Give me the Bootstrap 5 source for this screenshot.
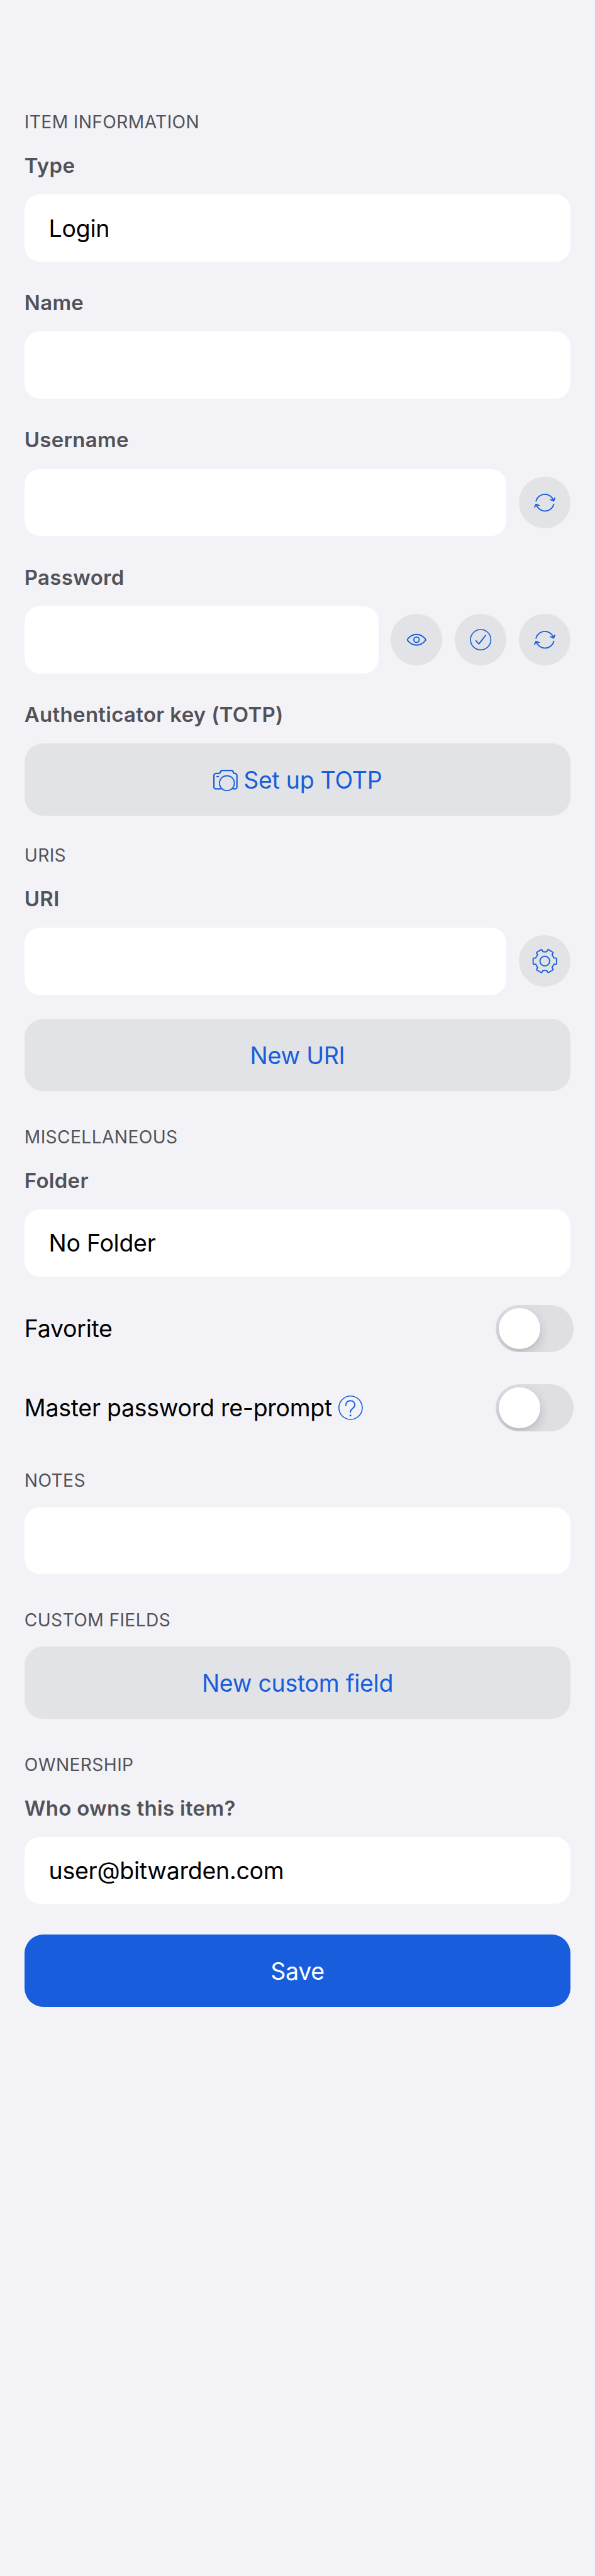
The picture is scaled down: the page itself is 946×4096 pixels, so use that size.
<!DOCTYPE html>
<html lang="en">
<head>
<meta charset="utf-8">
<meta name="viewport" content="width=device-width, initial-scale=1">
<title>Add item</title>
<link href="https://cdn.jsdelivr.net/npm/bootstrap@5.3.0/dist/css/bootstrap.min.css" rel="stylesheet">
<style>
/* 1rem is 16 points on the phone screen; --u is a third of a point */
html { font-size: 38.812px; }
:root { --u: .0208334rem; --brand: #175ddc; --fill: #e2e3e7; --muted: #525258; }
body {
  background: #f2f2f7; color: #000; min-height: 4096px;
  font-family: Inter, "Liberation Sans", sans-serif;
  font-size: calc(var(--u) * 46.4); letter-spacing: -.0075em; line-height: 1.25;
}
main { padding: calc(var(--u) * 215) 1rem 0; }
.section-title {
  font-size: calc(var(--u) * 34.9); line-height: 1rem; font-weight: 400;
  letter-spacing: .013em; color: var(--muted); text-transform: uppercase;
  padding-top: calc(var(--u) * 1.3); margin: 0 0 calc(var(--u) * 32.7);
}
.section-title.tight { margin-bottom: calc(var(--u) * 27.7); }
.field-label {
  display: block; font-size: calc(var(--u) * 40.8); line-height: calc(var(--u) * 54); font-weight: 600;
  letter-spacing: .009em; color: var(--muted);
  padding-top: calc(var(--u) * 2); margin: 0 0 calc(var(--u) * 29);
}
.field-group + .field-group { margin-top: calc(var(--u) * 53.1); }
.form-control, .form-control:focus {
  height: calc(var(--u) * 132); border: 0; border-radius: calc(var(--u) * 30);
  background: #fff; color: #000; padding: calc(var(--u) * 2) 1rem 0;
  font-size: inherit; letter-spacing: inherit; box-shadow: none;
}
.btn-wide {
  height: calc(var(--u) * 142); border: 0; border-radius: calc(var(--u) * 37); padding: calc(var(--u) * 3) 0 0;
  font-size: inherit; letter-spacing: inherit; background: var(--fill); color: var(--brand);
}
.btn-wide.primary { background: var(--brand); color: #fff; }
.btn-round {
  flex: none; width: calc(var(--u) * 102); height: calc(var(--u) * 102);
  border-radius: 50%; border: 0; padding: 0; background: var(--fill); color: var(--brand);
}
svg { display: block; fill: none; stroke: currentColor; stroke-width: 7; stroke-linecap: round; stroke-linejoin: round; }
.btn-round svg { width: 100%; height: 100%; }
.camera { width: calc(var(--u) * 48); height: calc(var(--u) * 42); margin-right: calc(var(--u) * 12); }
.help { width: 1rem; height: 1rem; color: var(--brand); margin-left: calc(var(--u) * 12); }
.section-gap { margin-top: calc(var(--u) * 65.1); }
.uris { padding-top: calc(var(--u) * 54.3); }
.toggles { margin-top: calc(var(--u) * 56); gap: calc(var(--u) * 63); }
.toggle-row { height: calc(var(--u) * 93); margin-right: calc(var(--u) * -6); }
.toggle-text { padding-top: calc(var(--u) * 2); }
.toggle {
  width: calc(var(--u) * 153); height: calc(var(--u) * 93); border-radius: 99rem;
  background: #dedee3; padding: calc(var(--u) * 6); overflow: hidden;
}
.knob {
  width: calc(var(--u) * 81); height: calc(var(--u) * 81); border-radius: 50%; background: #fff;
  box-shadow: 0 calc(var(--u) * 8) calc(var(--u) * 22) rgba(0,0,0,.16), 0 calc(var(--u) * 3) calc(var(--u) * 4) rgba(0,0,0,.05);
}
.notes { margin-top: calc(var(--u) * 72.1); }
.save { margin-top: calc(var(--u) * 60.3); }
</style>
</head>
<body>
<svg class="d-none">
  <symbol id="refresh" viewBox="0 0 306 306">
    <path d="M101 144A54 54 0 0 1 205 142M187 135L205 143L212 126M206 162A54 54 0 0 1 102 164M93 180L101 163L120 170"/>
  </symbol>
</svg>
<main>
  <section>
    <h2 class="section-title">Item information</h2>
    <div class="field-group">
      <label class="field-label">Type</label>
      <input class="form-control" value="Login" readonly>
    </div>
    <div class="field-group">
      <label class="field-label">Name</label>
      <input class="form-control">
    </div>
    <div class="field-group">
      <label class="field-label">Username</label>
      <div class="d-flex align-items-center gap-2">
        <input class="form-control">
        <button class="btn btn-round"><svg><use href="#refresh"/></svg></button>
      </div>
    </div>
    <div class="field-group">
      <label class="field-label">Password</label>
      <div class="d-flex align-items-center gap-2">
        <input class="form-control">
        <button class="btn btn-round">
          <svg viewBox="0 0 306 306"><path d="M100.500 149C115 131 133 121.500 153 121.500S191 131 205.500 149Q208 153 205.500 157C191 175 173 184.500 153 184.500S115 175 100.500 157Q98 153 100.500 149Z"/><circle cx="153" cy="153" r="16"/></svg>
        </button>
        <button class="btn btn-round">
          <svg viewBox="0 0 306 306"><circle cx="153" cy="153" r="60" stroke-width="6"/><path d="M125 159L139.500 175Q143 178 146 174L182 127"/></svg>
        </button>
        <button class="btn btn-round"><svg><use href="#refresh"/></svg></button>
      </div>
    </div>
    <div class="field-group">
      <label class="field-label">Authenticator key (TOTP)</label>
      <button class="btn btn-wide w-100 d-flex align-items-center justify-content-center">
        <svg class="camera" viewBox="0 0 144 126" overflow="visible"><path stroke-width="8" d="M46 113H16A12 12 0 0 1 4 101V34A12 12 0 0 1 16 22H32Q40 22 42 14Q45 4 53 4H108Q116 4 118 13Q120 22 128 22A12 12 0 0 1 140 34V101A12 12 0 0 1 128 113H116M22 40H31"/><circle cx="81" cy="79" r="44"/></svg>
        <span>Set up TOTP</span>
      </button>
    </div>
  </section>

  <section>
    <h2 class="section-title uris">URIs</h2>
    <label class="field-label">URI</label>
    <div class="d-flex align-items-center gap-2 mb-3">
      <input class="form-control">
      <button class="btn btn-round">
        <svg viewBox="-153 -153 306 306"><path d="M54-18H65Q69-18 69-14V14Q69 18 65 18H54L42.600 37.800L48 47.500Q50 51 46.500 53L22.500 67Q18.500 69 16.500 65.500L11.400 55.800Q0 54-11.400 55.800L-16.500 65.500Q-18.500 69-22.500 67L-46.500 53Q-50 51-48 47.500L-42.600 37.800L-54 18H-65Q-69 18-69 14V-14Q-69-18-65-18H-54L-42.600-37.800L-48-47.500Q-50-51-46.500-53L-22.500-67Q-18.500-69-16.500-65.500L-11.400-55.800Q0-54 11.400-55.800L16.500-65.500Q18.500-69 22.500-67L46.500-53Q50-51 48-47.500L42.600-37.800Z"/><circle r="28.500"/></svg>
      </button>
    </div>
    <button class="btn btn-wide w-100">New URI</button>
  </section>

  <section class="section-gap">
    <h2 class="section-title">Miscellaneous</h2>
    <label class="field-label">Folder</label>
    <input class="form-control" value="No Folder" readonly>
    <div class="toggles d-flex flex-column">
      <div class="toggle-row d-flex align-items-center justify-content-between">
        <span class="toggle-text">Favorite</span>
        <div class="toggle" role="switch" aria-checked="false"><div class="knob"></div></div>
      </div>
      <div class="toggle-row d-flex align-items-center justify-content-between">
        <div class="d-flex align-items-center">
          <span class="toggle-text">Master password re-prompt</span>
          <svg class="help" viewBox="0 0 144 144"><circle cx="72" cy="72" r="69" stroke-width="6"/><path d="M44 58C43 41 55 30.500 71 30.500C87 30.500 97 41 97 55C97 66 91 71 83 77C75 83 70.500 88 70.500 99"/><circle cx="71" cy="118" r="5.500" fill="currentColor" stroke="none"/></svg>
        </div>
        <div class="toggle" role="switch" aria-checked="false"><div class="knob"></div></div>
      </div>
    </div>
  </section>

  <section class="notes">
    <h2 class="section-title tight">Notes</h2>
    <input class="form-control">
  </section>

  <section class="section-gap">
    <h2 class="section-title tight">Custom fields</h2>
    <button class="btn btn-wide w-100">New custom field</button>
  </section>

  <section class="section-gap">
    <h2 class="section-title">Ownership</h2>
    <label class="field-label">Who owns this item?</label>
    <input class="form-control" value="user@bitwarden.com" readonly>
  </section>

  <button class="btn btn-wide primary save w-100">Save</button>
</main>
<script src="https://cdn.jsdelivr.net/npm/bootstrap@5.3.0/dist/js/bootstrap.bundle.min.js"></script>
</body>
</html>
